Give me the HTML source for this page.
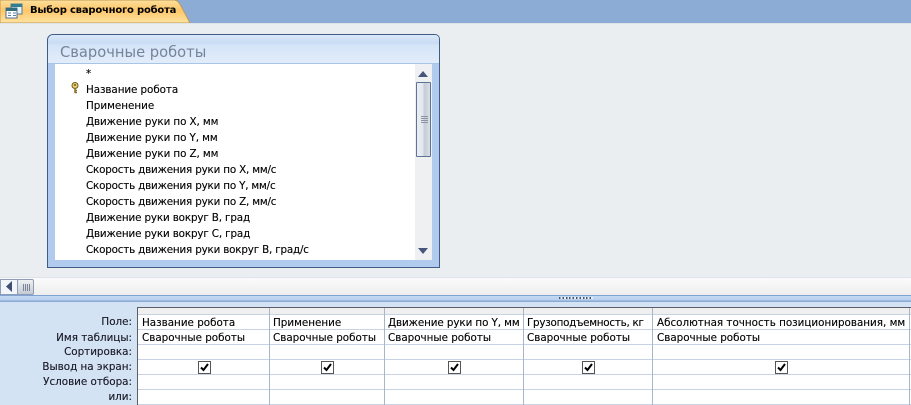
<!DOCTYPE html>
<html><head><meta charset="utf-8">
<style>
html,body{margin:0;padding:0}
body{width:911px;height:405px;position:relative;overflow:hidden;background:#ebeef1;font-family:"DejaVu Sans",sans-serif;font-size:10.35px;color:#000;-webkit-text-stroke:.12px #000}
.a{position:absolute}
.t{position:absolute;white-space:nowrap;line-height:14px;height:14px}
.li{left:86px}
.lb{right:779px;text-align:right;color:#1a1a2a}
.h{background:#c8d4e6}
.v{background:#a9b6c9}
.cb{position:absolute;width:11px;height:11px;border:1px solid #555;background:#fff;top:361px}
</style></head><body>
<!-- tab bar -->
<div class="a" style="left:0;top:0;width:911px;height:23px;background:#8cacd6"></div>
<svg class="a" style="left:0;top:0" width="195" height="24">
<defs><linearGradient id="g" x1="0" y1="0" x2="0" y2="1"><stop offset="0" stop-color="#fddf9c"/><stop offset=".45" stop-color="#fdc66a"/><stop offset="1" stop-color="#fee3a0"/></linearGradient></defs>
<path d="M0 0H174Q178 0 181 6L190 23H0Z" fill="url(#g)" stroke="#c09a58"/>
<rect x="11" y="4" width="11" height="10" fill="#e8f0f8" stroke="#4e7f90"/><rect x="11" y="4" width="11" height="3" fill="#2f7f90"/>
<rect x="6" y="8" width="11" height="10" fill="#fff" stroke="#4e6f90"/><rect x="6" y="8" width="11" height="3" fill="#2f6f80"/>
<path d="M8 13h3M13 13h3M8 15.500h3M13 15.500h3" stroke="#5a80a8"/>
</svg>
<div class="t" style="left:30px;top:4px;font:bold 10px/14px 'DejaVu Sans',sans-serif;letter-spacing:-.2px;-webkit-text-stroke:0">Выбор сварочного робота</div>
<div class="a" style="left:0;top:23px;width:911px;height:1px;background:#dfe3e8"></div>

<!-- table box -->
<div class="a" style="left:47px;top:34px;width:391px;height:232px;border:1px solid #3e5c84;border-radius:6px 5px 0 0;background:#b0cbee"></div>
<div class="a" style="left:48px;top:35px;width:391px;height:29px;border-radius:5px 4px 0 0;background:linear-gradient(#dbe8f8 0,#c8dcf5 8px,#d4e4f8 10px,#e2edfb 100%);border-bottom:1px solid #a8c4e8;box-sizing:border-box"></div>
<div class="t" style="left:60px;top:44px;font-size:14.700px;line-height:18px;height:18px;color:#76849a;-webkit-text-stroke:0">Сварочные роботы</div>
<div class="a" style="left:55px;top:64px;width:360px;height:196px;background:#fff"></div>
<div class="a" style="left:415px;top:64px;width:17px;height:196px;background:#eff0f2"></div>
<div class="a" style="left:416px;top:82px;width:13px;height:73px;border:1px solid #5e7398;border-radius:1px;background:linear-gradient(90deg,#eceef2,#e3e6ec 45%,#c3ccd8 55%,#d9dee6)"></div>
<div class="a" style="left:421px;top:116px;width:7px;height:1px;background:#8a94a2;box-shadow:0 2px 0 #8a94a2,0 4px 0 #8a94a2,0 6px 0 #8a94a2"></div>
<svg class="a" style="left:418px;top:71px" width="12" height="8"><path d="M5 0L10 6H0Z" fill="#46567a"/></svg>
<svg class="a" style="left:418px;top:248px" width="12" height="8"><path d="M0 0H10L5 6Z" fill="#46567a"/></svg>

<div class="t li" style="top:67px">*</div>
<svg class="a" style="left:71px;top:82px" width="9" height="12"><circle cx="4" cy="3.500" r="3" fill="#e8d070" stroke="#6e5a20"/><circle cx="4" cy="3" r="1" fill="#6e5a20"/><path d="M4 6V11M4 8.500H6M4 10.500H6" stroke="#8a6f20" stroke-width="1.500" fill="none"/></svg>
<div class="t li" style="top:83px;letter-spacing:-.07px">Название робота</div>
<div class="t li" style="top:99px">Применение</div>
<div class="t li" style="top:115px;letter-spacing:-.09px">Движение руки по X, мм</div>
<div class="t li" style="top:131px;letter-spacing:-.09px">Движение руки по Y, мм</div>
<div class="t li" style="top:147px;letter-spacing:-.09px">Движение руки по Z, мм</div>
<div class="t li" style="top:163px;letter-spacing:-.18px">Скорость движения руки по X, мм/с</div>
<div class="t li" style="top:179px;letter-spacing:-.18px">Скорость движения руки по Y, мм/с</div>
<div class="t li" style="top:195px;letter-spacing:-.18px">Скорость движения руки по Z, мм/с</div>
<div class="t li" style="top:211px;letter-spacing:-.14px">Движение руки вокруг B, град</div>
<div class="t li" style="top:227px;letter-spacing:-.14px">Движение руки вокруг C, град</div>
<div class="t li" style="top:243px;letter-spacing:-.18px">Скорость движения руки вокруг B, град/с</div>

<!-- h scrollbar -->
<div class="a" style="left:0;top:278px;width:911px;height:17px;background:linear-gradient(#fbfbfb,#eeeeee)"></div>
<div class="a" style="left:0;top:277px;width:911px;height:1px;background:#dde3ea"></div>
<div class="a" style="left:0;top:279px;width:16px;height:14px;background:#f2f5f9;border:1px solid #8f9db5;box-sizing:content-box"></div>
<svg class="a" style="left:5px;top:280px" width="10" height="14"><path d="M7 1V12L1 6.500Z" fill="#3f4f72"/></svg>
<div class="a" style="left:17px;top:279px;width:15px;height:14px;background:linear-gradient(#eef0f4,#c4cad4);border:1px solid #8f9db5;border-radius:2px"></div>
<div class="a" style="left:23px;top:284px;width:1px;height:7px;background:#7a8494;box-shadow:2px 0 0 #7a8494,4px 0 0 #7a8494,6px 0 0 #7a8494"></div>

<!-- splitter -->
<div class="a" style="left:0;top:295px;width:911px;height:7px;background:linear-gradient(#7fa3d3 0,#7fa3d3 1px,#c4daf4 1px,#b8d0ee 5px,#8aa9d4 6px)"></div>
<div class="a" style="left:559px;top:297px;width:34px;height:2px;background:repeating-linear-gradient(90deg,#44526a 0 1.500px,#e8f0fa 1.500px 3.400px)"></div>

<!-- design grid -->
<div class="a" style="left:0;top:302px;width:911px;height:103px;background:#d3e3f3"></div>
<div class="a" style="left:137px;top:307px;width:774px;height:98px;background:#fff"></div>
<div class="a" style="left:137px;top:307px;width:774px;height:1px;background:#5a5f6a"></div>
<div class="a" style="left:137px;top:308px;width:774px;height:6px;background:#efefef"></div>
<div class="a" style="left:137px;top:307px;width:1px;height:98px;background:#5a5f6a"></div>
<div class="a h" style="left:138px;top:314px;width:773px;height:1px"></div>
<div class="a h" style="left:138px;top:329px;width:773px;height:1px"></div>
<div class="a h" style="left:138px;top:344px;width:773px;height:1px"></div>
<div class="a h" style="left:138px;top:359px;width:773px;height:1px"></div>
<div class="a h" style="left:138px;top:374px;width:773px;height:1px"></div>
<div class="a h" style="left:138px;top:389px;width:773px;height:1px"></div>
<div class="a h" style="left:138px;top:404px;width:773px;height:1px"></div>
<div class="a v" style="left:269px;top:308px;width:1px;height:97px"></div>
<div class="a v" style="left:384px;top:308px;width:1px;height:97px"></div>
<div class="a v" style="left:523px;top:308px;width:1px;height:97px"></div>
<div class="a v" style="left:652px;top:308px;width:1px;height:97px"></div>
<div class="a v" style="left:909px;top:308px;width:1px;height:97px"></div>

<div class="t lb" style="top:315px">Поле:</div>
<div class="t lb" style="top:331px">Имя таблицы:</div>
<div class="t lb" style="top:345px">Сортировка:</div>
<div class="t lb" style="top:360px">Вывод на экран:</div>
<div class="t lb" style="top:375px">Условие отбора:</div>
<div class="t lb" style="top:390px">или:</div>

<div class="t" style="left:142px;top:316px">Название робота</div>
<div class="t" style="left:273px;top:316px">Применение</div>
<div class="t" style="left:388px;top:316px;letter-spacing:-.09px">Движение руки по Y, мм</div>
<div class="t" style="left:527px;top:316px;letter-spacing:-.25px">Грузоподъемность, кг</div>
<div class="t" style="left:657px;top:316px">Абсолютная точность позиционирования, мм</div>
<div class="t" style="left:142px;top:331px">Сварочные роботы</div>
<div class="t" style="left:273px;top:331px">Сварочные роботы</div>
<div class="t" style="left:388px;top:331px">Сварочные роботы</div>
<div class="t" style="left:527px;top:331px">Сварочные роботы</div>
<div class="t" style="left:657px;top:331px">Сварочные роботы</div>

<div class="cb" style="left:198px"><svg width="11" height="11" style="display:block"><path d="M2 5.500L4.500 8L9 2" fill="none" stroke="#000" stroke-width="2"/></svg></div>
<div class="cb" style="left:321px"><svg width="11" height="11" style="display:block"><path d="M2 5.500L4.500 8L9 2" fill="none" stroke="#000" stroke-width="2"/></svg></div>
<div class="cb" style="left:448px"><svg width="11" height="11" style="display:block"><path d="M2 5.500L4.500 8L9 2" fill="none" stroke="#000" stroke-width="2"/></svg></div>
<div class="cb" style="left:582px"><svg width="11" height="11" style="display:block"><path d="M2 5.500L4.500 8L9 2" fill="none" stroke="#000" stroke-width="2"/></svg></div>
<div class="cb" style="left:775px"><svg width="11" height="11" style="display:block"><path d="M2 5.500L4.500 8L9 2" fill="none" stroke="#000" stroke-width="2"/></svg></div>
</body></html>
